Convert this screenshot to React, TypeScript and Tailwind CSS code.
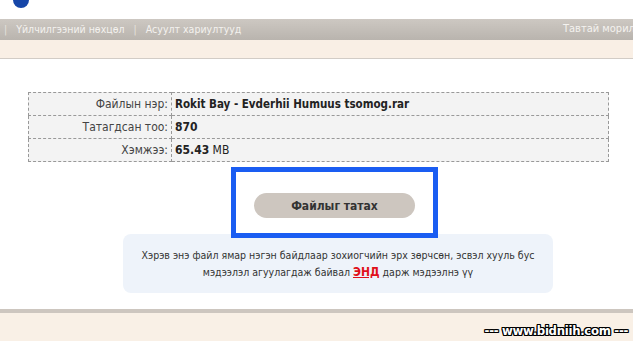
import React from "react";

const rows = [
  { label: "Файлын нэр:", value: <b className="text-[11.5px]">Rokit Bay - Evderhii Humuus tsomog.rar</b> },
  { label: "Татагдсан тоо:", value: <b>870</b> },
  {
    label: "Хэмжээ:",
    value: (
      <>
        <b>65.43</b> MB
      </>
    ),
  },
];

export default function App() {
  return (
    <div className="flex h-[341px] w-[633px] flex-col overflow-hidden bg-white font-['DejaVu_Sans_Condensed','DejaVu_Sans',sans-serif] text-[12px] text-[#333] [font-stretch:condensed]">
      {/* top strip */}
      <div className="relative h-[19px] shrink-0 bg-white">
        <div className="absolute left-[13px] top-[-8px] h-[16px] w-[16px] rounded-full bg-[#1646a8]" />
      </div>

      {/* nav */}
      <div className="flex h-[21px] shrink-0 items-center overflow-hidden whitespace-nowrap bg-gradient-to-b from-[#cdc8c2] to-[#b9b4ae] text-[10.5px] text-[#f4f2ef]">
        <div className="flex w-[563px] shrink-0 items-center pl-[4px]">
          <span className="text-[#e6e2dd]">|</span>
          <span className="ml-[9px]">Үйлчилгээний нөхцөл</span>
          <span className="ml-[9px] text-[#e6e2dd]">|</span>
          <span className="ml-[9px]">Асуулт хариултууд</span>
        </div>
        <span className="shrink-0 text-[11px]">Тавтай морил</span>
      </div>
      <div className="h-[19px] shrink-0 border-b border-[#d2ccc6] bg-[#f9efe5]" />

      {/* content */}
      <div className="flex flex-1 flex-col items-start">
        <table className="ml-[28px] mt-[33px] w-[581px] border-collapse bg-[#f3f3f3]">
          <tbody>
            {rows.map((r) => (
              <tr key={r.label} className="h-[23px]">
                <td className="w-[143px] border border-dashed border-[#999] pr-[3px] text-right text-[#444]">
                  {r.label}
                </td>
                <td className="border border-dashed border-[#999] pl-[3px] text-[#222]">{r.value}</td>
              </tr>
            ))}
          </tbody>
        </table>

        <div className="relative z-10 ml-[231px] mt-[5px] flex h-[71px] w-[207px] items-start justify-center border-[5px] border-[#1a5df2] bg-white pt-[21px]">
          <button className="h-[25px] w-[161px] rounded-full bg-[#cdc6bf] text-[12px] font-bold text-[#333]">
            Файлыг татах
          </button>
        </div>

        <div className="-mt-[4px] ml-[123px] flex h-[59px] w-[430px] flex-col items-center justify-center whitespace-nowrap rounded-[8px] bg-[#eef3fa] text-center text-[10.5px] leading-[17px] text-[#333]">
          <p>Хэрэв энэ файл ямар нэгэн байдлаар зохиогчийн эрх зөрчсөн, эсвэл хууль бус</p>
          <p>
            мэдээлэл агуулагдаж байвал{" "}
            <a className="text-[12px] font-bold text-[#e0101a] underline">ЭНД</a> дарж мэдээлнэ үү
          </p>
        </div>
      </div>

      {/* footer */}
      <div className="h-[4px] shrink-0 bg-[#cdc6bf]" />
      <div className="flex h-[28px] shrink-0 items-end justify-end bg-[#f9f0e6] pb-[4px] pr-[5px]">
        <span className="text-[13px] font-bold leading-[13px] tracking-[-0.3px] text-white [text-shadow:1px_0_0_#000,-1px_0_0_#000,0_1px_0_#000,0_-1px_0_#000,1px_1px_0_#000,-1px_-1px_0_#000,1px_-1px_0_#000,-1px_1px_0_#000]">
          --- www.bidniih.com ---
        </span>
      </div>
    </div>
  );
}
